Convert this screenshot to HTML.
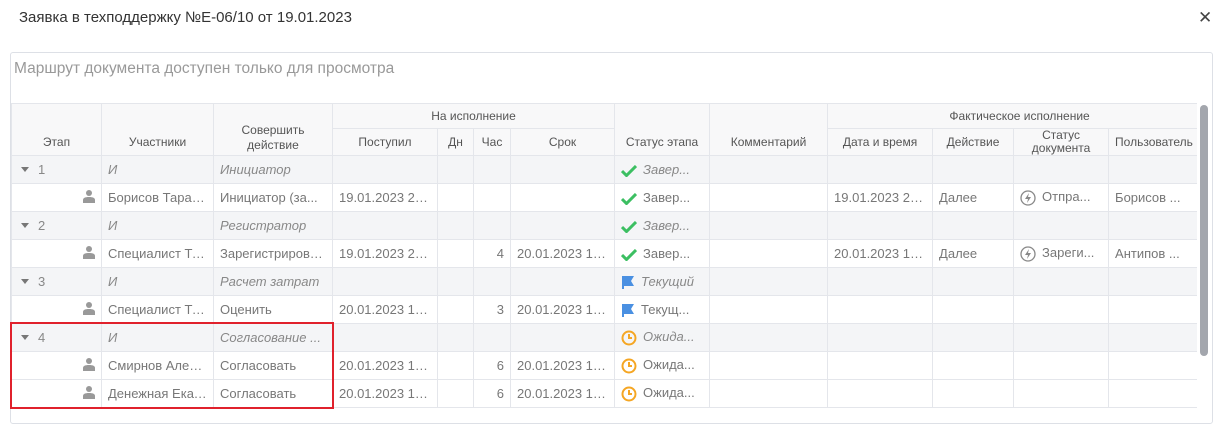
<!DOCTYPE html><html><head><meta charset="utf-8"><style>
body{margin:0;width:1219px;height:408px;overflow:hidden;background:#fff;font-family:"Liberation Sans","DejaVu Sans",sans-serif;position:relative}
.t{position:absolute;left:19px;top:9px;font-size:15px;color:#333}
.x{position:absolute;left:1198px;top:8px;font-size:17px;color:#444}
.box{position:absolute;left:10px;top:52px;width:1201px;height:370px;border:1px solid #dde0e6;border-radius:3px}
.m{position:absolute;left:14px;top:60px;font-size:15.5px;color:#999}
.wrap{position:absolute;left:11px;top:103px;width:1186px;height:305px;overflow:hidden}
table{border-collapse:collapse;table-layout:fixed;width:1200px;font-size:13px;color:#777}
td,th{border:1px solid #e4e6eb;height:27px;padding:0 6px;white-space:nowrap;overflow:hidden;text-overflow:ellipsis;text-align:left}
th{font-weight:normal;color:#555;font-size:12px;text-align:center;height:24px;background:#f8f8f9}
tr.g td{background:#f4f5f7;font-style:italic;color:#888}
.r{text-align:right}
.sb{position:absolute;left:1200px;top:105px;width:8px;height:251px;background:#a3a6ad;border-radius:4px}
.red{position:absolute;left:10px;top:322px;width:320px;height:83px;border:2px solid #e0212c}
.tri{display:inline-block;width:0;height:0;border-left:4px solid transparent;border-right:4px solid transparent;border-top:5px solid #777;margin:0 9px 2px 3px;vertical-align:middle}
.ic{display:inline-block;vertical-align:middle;margin-right:6px}
</style></head><body>
<div class="t">Заявка в техподдержку №Е-06/10 от 19.01.2023</div>
<div class="x">✕</div>
<div class="box"></div>
<div class="m">Маршрут документа доступен только для просмотра</div>
<div class="wrap"><table>
<colgroup><col style="width:90px"><col style="width:112px"><col style="width:119px"><col style="width:105px"><col style="width:36px"><col style="width:37px"><col style="width:104px"><col style="width:95px"><col style="width:118px"><col style="width:105px"><col style="width:81px"><col style="width:95px"><col style="width:103px"></colgroup>
<tr><th rowspan="2" style="vertical-align:bottom;padding-bottom:6px">Этап</th><th rowspan="2" style="vertical-align:bottom;padding-bottom:6px">Участники</th><th rowspan="2" style="vertical-align:bottom;line-height:15px;padding-bottom:2px">Совершить<br>действие</th><th colspan="4">На исполнение</th><th rowspan="2" style="vertical-align:bottom;padding-bottom:6px">Статус этапа</th><th rowspan="2" style="vertical-align:bottom;padding-bottom:6px">Комментарий</th><th colspan="4">Фактическое исполнение</th></tr>
<tr><th>Поступил</th><th>Дн</th><th>Час</th><th>Срок</th><th>Дата и время</th><th>Действие</th><th style="line-height:13px;vertical-align:top;padding-top:0">Статус<br>документа</th><th style="text-align:left">Пользователь</th></tr>
<tr class="g"><td style="font-style:normal"><span class="tri"></span>1</td><td>И</td><td>Инициатор</td><td></td><td></td><td></td><td></td><td><svg class="ic" width="16" height="12" viewBox="0 0 16 12"><path d="M1 6l4.5 4.5L15 1" stroke="#3cbf62" stroke-width="3" fill="none"/></svg>Завер...</td><td></td><td></td><td></td><td></td><td></td></tr>
<tr><td class="r"><svg width="12" height="13" viewBox="0 0 12 13"><circle cx="6" cy="3" r="3" fill="#999"/><path d="M0 13v-3c0-2 2-3 6-3s6 1 6 3v3z" fill="#999"/></svg></td><td>Борисов Тарас Игоревич</td><td>Инициатор (за...</td><td>19.01.2023 21:00</td><td></td><td></td><td></td><td><svg class="ic" width="16" height="12" viewBox="0 0 16 12"><path d="M1 6l4.5 4.5L15 1" stroke="#3cbf62" stroke-width="3" fill="none"/></svg>Завер...</td><td></td><td>19.01.2023 21:00</td><td>Далее</td><td><svg class="ic" width="16" height="16" viewBox="0 0 16 16"><circle cx="8" cy="8" r="7" stroke="#888" fill="none" stroke-width="1.3"/><path d="M9 3L5 9h3l-1 4 4-6H8z" fill="#888"/></svg>Отпра...</td><td>Борисов ...</td></tr>
<tr class="g"><td style="font-style:normal"><span class="tri"></span>2</td><td>И</td><td>Регистратор</td><td></td><td></td><td></td><td></td><td><svg class="ic" width="16" height="12" viewBox="0 0 16 12"><path d="M1 6l4.5 4.5L15 1" stroke="#3cbf62" stroke-width="3" fill="none"/></svg>Завер...</td><td></td><td></td><td></td><td></td><td></td></tr>
<tr><td class="r"><svg width="12" height="13" viewBox="0 0 12 13"><circle cx="6" cy="3" r="3" fill="#999"/><path d="M0 13v-3c0-2 2-3 6-3s6 1 6 3v3z" fill="#999"/></svg></td><td>Специалист Техподдержки</td><td>Зарегистрировать</td><td>19.01.2023 21:00</td><td></td><td class="r">4</td><td>20.01.2023 10:00</td><td><svg class="ic" width="16" height="12" viewBox="0 0 16 12"><path d="M1 6l4.5 4.5L15 1" stroke="#3cbf62" stroke-width="3" fill="none"/></svg>Завер...</td><td></td><td>20.01.2023 10:00</td><td>Далее</td><td><svg class="ic" width="16" height="16" viewBox="0 0 16 16"><circle cx="8" cy="8" r="7" stroke="#888" fill="none" stroke-width="1.3"/><path d="M9 3L5 9h3l-1 4 4-6H8z" fill="#888"/></svg>Зареги...</td><td>Антипов ...</td></tr>
<tr class="g"><td style="font-style:normal"><span class="tri"></span>3</td><td>И</td><td>Расчет затрат</td><td></td><td></td><td></td><td></td><td><svg class="ic" width="14" height="14" viewBox="0 0 14 14"><path d="M1 1h12l-3 5 3 5H3v3H1z" fill="#4a90e2"/></svg>Текущий</td><td></td><td></td><td></td><td></td><td></td></tr>
<tr><td class="r"><svg width="12" height="13" viewBox="0 0 12 13"><circle cx="6" cy="3" r="3" fill="#999"/><path d="M0 13v-3c0-2 2-3 6-3s6 1 6 3v3z" fill="#999"/></svg></td><td>Специалист Техподдержки</td><td>Оценить</td><td>20.01.2023 10:00</td><td></td><td class="r">3</td><td>20.01.2023 13:00</td><td><svg class="ic" width="14" height="14" viewBox="0 0 14 14"><path d="M1 1h12l-3 5 3 5H3v3H1z" fill="#4a90e2"/></svg>Текущ...</td><td></td><td></td><td></td><td></td><td></td></tr>
<tr class="g"><td style="font-style:normal"><span class="tri"></span>4</td><td>И</td><td>Согласование ...</td><td></td><td></td><td></td><td></td><td><svg class="ic" width="16" height="16" viewBox="0 0 16 16"><circle cx="8" cy="8" r="6.5" stroke="#f5a623" stroke-width="2" fill="none"/><path d="M8 4v4h3" stroke="#f5a623" stroke-width="2" fill="none"/></svg>Ожида...</td><td></td><td></td><td></td><td></td><td></td></tr>
<tr><td class="r"><svg width="12" height="13" viewBox="0 0 12 13"><circle cx="6" cy="3" r="3" fill="#999"/><path d="M0 13v-3c0-2 2-3 6-3s6 1 6 3v3z" fill="#999"/></svg></td><td>Смирнов Алексей</td><td>Согласовать</td><td>20.01.2023 13:00</td><td></td><td class="r">6</td><td>20.01.2023 19:00</td><td><svg class="ic" width="16" height="16" viewBox="0 0 16 16"><circle cx="8" cy="8" r="6.5" stroke="#f5a623" stroke-width="2" fill="none"/><path d="M8 4v4h3" stroke="#f5a623" stroke-width="2" fill="none"/></svg>Ожида...</td><td></td><td></td><td></td><td></td><td></td></tr>
<tr><td class="r"><svg width="12" height="13" viewBox="0 0 12 13"><circle cx="6" cy="3" r="3" fill="#999"/><path d="M0 13v-3c0-2 2-3 6-3s6 1 6 3v3z" fill="#999"/></svg></td><td>Денежная Екатерина</td><td>Согласовать</td><td>20.01.2023 13:00</td><td></td><td class="r">6</td><td>20.01.2023 19:00</td><td><svg class="ic" width="16" height="16" viewBox="0 0 16 16"><circle cx="8" cy="8" r="6.5" stroke="#f5a623" stroke-width="2" fill="none"/><path d="M8 4v4h3" stroke="#f5a623" stroke-width="2" fill="none"/></svg>Ожида...</td><td></td><td></td><td></td><td></td><td></td></tr>
</table></div>
<div class="sb"></div>
<div class="red"></div>
</body></html>
